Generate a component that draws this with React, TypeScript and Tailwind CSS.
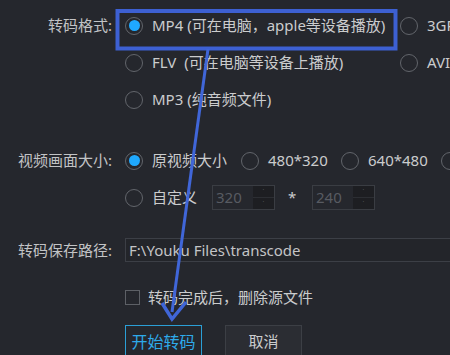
import React from "react";

const FONT = { fontFamily: '"Noto Sans", "Noto Sans CJK SC", sans-serif' };

function Radio({ checked = false }: { checked?: boolean }) {
  return (
    <span className="flex h-[18px] w-[18px] shrink-0 items-center justify-center rounded-full border border-[#62656b]">
      {checked && <span className="h-[11px] w-[11px] rounded-full bg-[#1fa9ff]" />}
    </span>
  );
}

function Option({ label, checked, className = "" }: { label: string; checked?: boolean; className?: string }) {
  return (
    <div className={`flex items-center gap-[9px] whitespace-pre ${className}`}>
      <Radio checked={checked} />
      <span>{label}</span>
    </div>
  );
}

function Spin({ value }: { value: string }) {
  return (
    <div className="flex h-[25px] w-[63px] border border-[#3a3d43]">
      <span className="flex flex-1 items-center pl-[3px] text-[#585b62]">{value}</span>
      <div className="flex w-[21px] flex-col bg-[#1d1e22]">
        <span className="flex flex-1 items-center justify-center border-b border-[#2c2e33] text-[7px] leading-none text-[#6a6d73]">
          ˙
        </span>
        <span className="flex flex-1 items-center justify-center text-[7px] leading-none text-[#6a6d73]">˙</span>
      </div>
    </div>
  );
}

function Label({ children }: { children: React.ReactNode }) {
  return <div className="w-[113px] shrink-0 pr-[1px] text-right text-[#c2c3c5]">{children}</div>;
}

export default function App() {
  return (
    <div
      className="relative h-[355px] w-[450px] overflow-hidden bg-[#25272d] text-[15px] text-[#cbcccd]"
      style={FONT}
    >
      <div className="flex flex-col pt-[7px]">
        {/* output format */}
        <div className="flex">
          <Label>
            <div className="flex h-[37px] items-center justify-end">转码格式:</div>
          </Label>
          <div className="ml-[12px] grid grid-cols-[275px_1fr] whitespace-nowrap">
            <Option className="h-[37px]" checked label="MP4 (可在电脑，apple等设备播放)" />
            <Option className="h-[37px]" label="3GP" />
            <Option className="h-[37px]" label="FLV  (可在电脑等设备上播放)" />
            <Option className="h-[37px]" label="AVI" />
            <Option className="h-[37px]" label="MP3 (纯音频文件)" />
          </div>
        </div>

        {/* frame size */}
        <div className="mt-[24px] flex">
          <Label>
            <div className="flex h-[37px] items-center justify-end">视频画面大小:</div>
          </Label>
          <div className="ml-[12px] flex flex-col whitespace-nowrap">
            <div className="flex h-[37px] items-center">
              <Option className="w-[116px]" checked label="原视频大小" />
              <Option className="w-[100px]" label="480*320" />
              <Option className="w-[100px]" label="640*480" />
              <Radio />
            </div>
            <div className="flex h-[37px] items-center">
              <Option className="w-[87px]" label="自定义" />
              <Spin value="320" />
              <span className="ml-[13px] w-[24px] text-[#cbcccd]">*</span>
              <Spin value="240" />
            </div>
          </div>
        </div>

        {/* save path */}
        <div className="mt-[22px] flex items-center">
          <Label>转码保存路径:</Label>
          <div className="ml-[12px] flex h-[24px] flex-1 items-center border border-r-0 border-[#3c3f46] bg-[#23252a] pl-[3px] text-[#c3c4c6]">
            F:\Youku Files\transcode
          </div>
        </div>

        {/* delete source */}
        <div className="mt-[25px] flex h-[20px] items-center pl-[125px]">
          <span className="h-[15px] w-[15px] border border-[#5d6066]" />
          <span className="ml-[8px]">转码完成后，删除源文件</span>
        </div>

        {/* actions */}
        <div className="mt-[18px] flex gap-[23px] pl-[125px]">
          <button className="flex h-[33px] w-[77px] items-center justify-center border border-[#2b9fd6] text-[16px] text-[#2eaaea]">
            开始转码
          </button>
          <button className="flex h-[33px] w-[77px] items-center justify-center border border-[#3c3f45] bg-[#2b2d33] text-[15px] text-[#cbcccd]">
            取消
          </button>
        </div>
      </div>

      {/* annotation overlay */}
      <svg className="pointer-events-none absolute inset-0" width="450" height="355" viewBox="0 0 450 355">
        <rect x="117.5" y="11" width="278" height="37.5" fill="none" stroke="#3d60d2" strokeWidth="4" />
        <line x1="208" y1="49" x2="172" y2="312" stroke="#4066d8" strokeWidth="3" />
        <polyline
          points="162,303 172,319 186,302"
          fill="none"
          stroke="#4066d8"
          strokeWidth="3.5"
          strokeLinejoin="miter"
        />
      </svg>
    </div>
  );
}
